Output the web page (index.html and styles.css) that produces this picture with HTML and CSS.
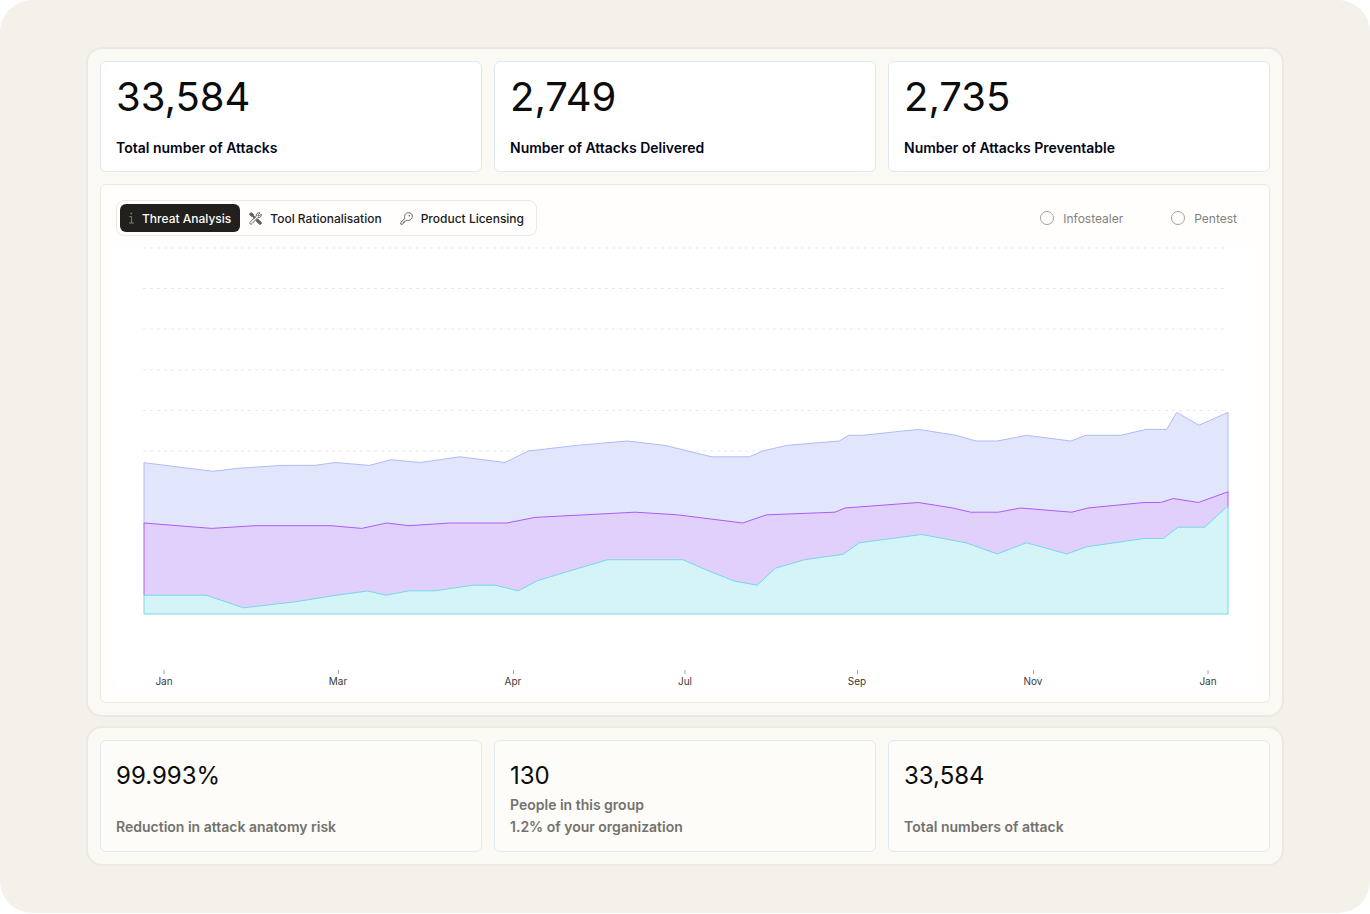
FILE: index.html
```html
<!DOCTYPE html>
<html lang="en">
<head>
  <meta charset="UTF-8">
  <meta name="viewport" content="width=device-width, initial-scale=1">
  <title>Threat Analysis</title>
  <link rel="stylesheet" href="styles.css">
</head>
<body>

  <main class="page">
    <section class="panel">
      <div class="cards">
        <div class="card card-main">
          <p class="value">33,584</p>
          <p class="label">Total number of Attacks</p>
        </div>
        <div class="card card-main">
          <p class="value">2,749</p>
          <p class="label">Number of Attacks Delivered</p>
        </div>
        <div class="card card-main">
          <p class="value">2,735</p>
          <p class="label">Number of Attacks Preventable</p>
        </div>
      </div>

      <div class="chart-card">
        <div class="toolbar">
          <div class="tabs">
            <button type="button" class="tab active">
              <svg class="icon-info" width="5" height="12" viewBox="0 0 5 12">
                <circle cx="2.3" cy="1.4" r="0.9" fill="currentColor" stroke="none" />
                <path d="M0.4 4.5H2.5V11M0 11H5" />
              </svg>
              Threat Analysis
            </button>
            <button type="button" class="tab">
              <svg width="13" height="13" viewBox="0 0 13 13">
                <path d="M1 1.2L2.6 0.9L4.6 2.6V3.7L6.3 5.4L5.3 6.3L3.6 4.6H2.6L0.8 2.8Z" fill="currentColor" />
                <path d="M7.6 7.6L9 7.2L12.2 10.4Q12.6 11.4 12 12Q11.3 12.6 10.4 12.2L7.3 9.1Z" fill="currentColor" />
                <path d="M11 0.9L9.1 2.8V4H10.3L12.2 2.1C12.7 4.3 11.2 6 8.8 5.6L3 11.7C2.4 12.4 1.6 12.3 1.1 11.8C0.6 11.3 0.6 10.6 1.2 10L7.3 4.2C6.8 1.9 8.7 0.3 11 0.9Z" />
              </svg>
              Tool Rationalisation
            </button>
            <button type="button" class="tab">
              <svg width="13" height="13" viewBox="0 0 13 13">
                <path d="M4.8 6.6C3.9 3.3 5.6 0.7 8.6 0.7C10.8 0.7 12.3 2.2 12.3 4.3C12.3 7.2 9.7 9 6.5 8.2L5.5 9.2H4.3V10.4H3.2V11.6L2.5 12.2H0.8V10.4Z" />
                <circle cx="9.3" cy="3.7" r="0.8" fill="currentColor" stroke="none" />
              </svg>
              Product Licensing
            </button>
          </div>

          <div class="filters">
            <label><input type="radio" name="source" value="infostealer">Infostealer</label>
            <label><input type="radio" name="source" value="pentest">Pentest</label>
          </div>
        </div>

        <svg class="chart" viewBox="0 0 1138 439" role="img" aria-label="Attacks per month">
          <g class="grid">
            <path d="M27 0H1112M27 40.5H1112M27 81H1112M27 122H1112M27 162.5H1112M27 203H1112M27 244H1112" />
          </g>
          <!-- the two back areas end under the front one, so only its outline shows on the baseline -->
          <path class="area attacks" d="M28 275V214.7L96.7 223.3L122.3 220.3L165.7 217.4H199L219 214.5L253.3 217.4L275 211.7L304 214.5L344 208.8L389 214.5L412.3 203L460.7 197.4L511.3 193L549 197.4L595.7 208.8H633.3L646.7 203L670.7 197.4L723.3 193L732.7 187.3H746.7L802.3 181.4L840 187.3L860 193H881.3L910.7 187.3L954.7 193L970 187.3H1004.7L1030 181.4H1050.7L1060.7 164.4L1083 177.2L1112 164.4V244L1100 364H40Z" />
          <path class="area delivered" d="M28 347V275L95.7 280.4L139 277.7H215L245.7 280.4L270.7 275L293 277.7L334 275H390.7L419 269.4L519 264.2L561.3 266.8L626.7 275L650.7 266.8L719 264.2L729 260L802.3 254.5L836.7 260L854.7 264.2H882.3L904.7 260L955.7 264.2L972 260L1028 254.5H1044.7L1057.3 250.5L1082.3 254.5L1112 243.8V258L1100 364H40Z" />
          <path class="area preventable" d="M28 366V347.2H90L127.3 359.8L178 354L220.7 347.2L251.7 343L270 347.2L293 342.8H319L356.7 337.2H379L402.3 342.8L421.3 332.8L450.7 323.8L491.7 311.7H566.7L592.3 322.8L618 333L641.3 337.2L659.3 320.2L688.7 311.7L727.3 306.2L743.3 294.8L805.7 286.5L850 294.8L881.3 306L910.3 294.8L926 299L950.7 306L970.7 298.8L1028 290.5H1047.3L1062 279.2H1088.7L1112 257.8V366Z" />
          <path class="ticks" d="M48 422V426M222.5 422V426M397.5 422V426M569 422V426M741.5 422V426M917.5 422V426M1092 422V426" />
          <g class="months">
            <text x="48" y="437">Jan</text>
            <text x="222" y="437">Mar</text>
            <text x="397" y="437">Apr</text>
            <text x="569" y="437">Jul</text>
            <text x="741" y="437">Sep</text>
            <text x="917" y="437">Nov</text>
            <text x="1092" y="437">Jan</text>
          </g>
        </svg>
      </div>
    </section>

    <section class="panel">
      <div class="cards">
        <div class="card card-sub">
          <p class="value">99.993%</p>
          <p class="label">Reduction in attack anatomy risk</p>
        </div>
        <div class="card card-sub">
          <p class="value">130</p>
          <p class="label">People in this group<br>1.2% of your organization</p>
        </div>
        <div class="card card-sub">
          <p class="value">33,584</p>
          <p class="label">Total numbers of attack</p>
        </div>
      </div>
    </section>
  </main>

</body>
</html>
```
FILE: styles.css
```css
* {
  box-sizing: border-box;
}

body {
  margin: 0;
  background: #fff;
  font-family: Inter, "Liberation Sans", sans-serif;
  color: #0c0c0c;
}

p {
  margin: 0;
}

.page {
  display: flex;
  flex-direction: column;
  gap: 9px;
  padding: 47px 86px;
  background: #f4f1ea;
  border-radius: 32px;
}

.panel {
  display: flex;
  flex-direction: column;
  gap: 12px;
  padding: 12px;
  background: #faf9f4;
  border: 2px solid #ebe9e4;
  border-radius: 16px;
}

.cards {
  display: grid;
  grid-template-columns: repeat(3, 1fr);
  gap: 12px;
}

.card {
  display: flex;
  flex-direction: column;
  justify-content: space-between;
  padding: 15px;
  border: 1px solid #e2e8f0;
  border-radius: 6px;
}

.card-main {
  min-height: 111px;
  padding-top: 11px;
  padding-bottom: 12px;
  background: #fff;
}

.card-main .value {
  font-size: 40px;
  line-height: 48px;
}

.label {
  font-size: 14px;
  font-weight: 600;
  line-height: 22px;
}

.card-main .label {
  color: #020617;
}

.card-sub {
  min-height: 112px;
  padding-top: 19px;
  padding-bottom: 13px;
  background: #fdfcf9;
}

.card-sub .value {
  font-size: 24px;
  line-height: 32px;
}

.card-sub .label {
  color: #73726d;
}

/* chart */

.chart-card {
  padding: 15px;
  background: #fffefc;
  border: 1px solid #ebe9e3;
  border-radius: 6px;
}

.toolbar {
  display: flex;
  justify-content: space-between;
  align-items: center;
  margin-bottom: 12px;
}

.tabs {
  display: flex;
  padding: 3px;
  border: 1px solid #ebe9e1;
  border-radius: 8px;
}

.tab {
  display: flex;
  align-items: center;
  gap: 8px;
  height: 28px;
  padding: 0 9px;
  border: none;
  border-radius: 6px;
  background: none;
  color: #21201c;
  font-family: inherit;
  font-size: 12px;
  font-weight: 500;
  cursor: pointer;
}

.tab svg {
  fill: none;
  stroke: currentColor;
  color: #63635e;
}

.tab.active {
  background: #21201c;
  color: #fdfdfc;
}

.tab.active .icon-info {
  color: #7c7b74;
}

.filters {
  display: flex;
  gap: 48px;
  padding-right: 17px;
}

.filters label {
  display: flex;
  align-items: center;
  gap: 9px;
  color: #82827c;
  font-size: 12px;
}

.filters input {
  appearance: none;
  width: 14px;
  height: 14px;
  margin: 0;
  border: 1px solid #a3a29b;
  border-radius: 50%;
}

.filters input:checked {
  border: 4px solid #21201c;
}

.chart {
  display: block;
  width: 100%;
  overflow: visible;
  background: #fff;
}

.grid {
  fill: none;
  stroke: #e6e8ee;
  stroke-dasharray: 3 4;
}

.attacks {
  fill: #e0e5fd;
  fill-opacity: 0.95;
  stroke: #b0bbf8;
}

.delivered {
  fill: #e0d0fb;
  stroke: #ab5cf5;
}

.preventable {
  fill: #d5f4f8;
  stroke: #76d9e8;
}

.ticks {
  stroke: #9aa5b8;
}

.months {
  fill: #3a3a38;
  font-size: 10px;
  text-anchor: middle;
}
```
